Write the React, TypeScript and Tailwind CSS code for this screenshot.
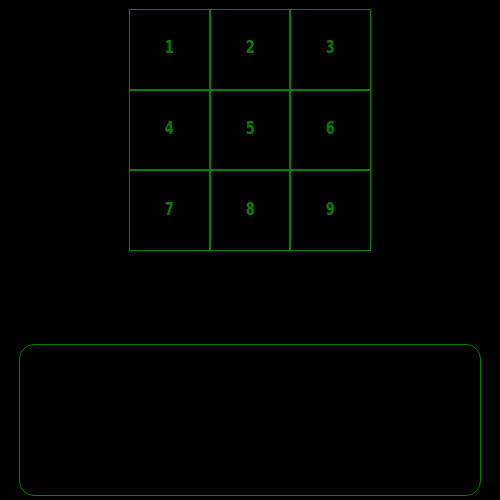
export default function App() {
  const cells = [1, 2, 3, 4, 5, 6, 7, 8, 9]

  return (
    <div className="w-[500px] h-[500px] bg-black flex flex-col items-center pt-[9px] overflow-hidden">
      <div className="grid grid-cols-3 w-[242px] h-[242px]">
        {cells.map((n) => (
          <div
            key={n}
            className="border border-[#008000] flex items-center justify-center pb-[4px]"
          >
            <span className="font-['DejaVu_Sans'] text-[18px] leading-none font-bold text-[#008000] scale-x-[0.72]">
              {n}
            </span>
          </div>
        ))}
      </div>
      <div className="mt-[93px] w-[462px] h-[152px] border border-[#008000] rounded-[15px]" />
    </div>
  )
}
